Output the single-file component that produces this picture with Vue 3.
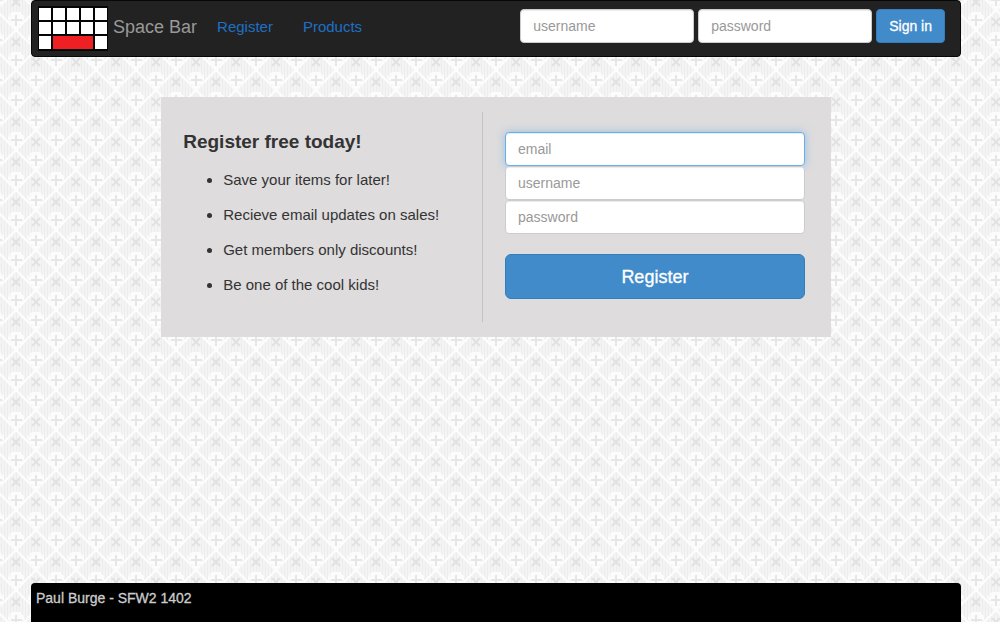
<script setup>
import { ref, onMounted } from 'vue'

const login = ref({ username: '', password: '' })
const account = ref({ email: '', username: '', password: '' })
const emailField = ref(null)
const perks = [
  'Save your items for later!',
  'Recieve email updates on sales!',
  'Get members only discounts!',
  'Be one of the cool kids!',
]

onMounted(() => emailField.value.focus())
</script>

<template>
  <div class="page">
    <svg class="backdrop" aria-hidden="true">
      <defs>
        <g id="motif">
          <path d="M0-30 20-10 0 10-20-10Z" fill="none" stroke="#fdfdfd" stroke-width="2" />
          <path d="M-8-4-4-8h8l4 4v6L0 10-8 2Z" fill="#fcfcfc" />
          <path d="M-7-4h2m10-2h2M-5 5h2m6 0h2M-8 1h2m12 0h2" stroke="#f0f0f0" stroke-width="1" />
          <path d="M0-5V6M-5 0H6" stroke="#e6e6e6" stroke-width="2" fill="none" />
          <path d="m-4-22 8 8m0-8-8 8" stroke="#e2e2e2" stroke-width="2" fill="none" />
        </g>
        <pattern id="damask" width="40" height="40" patternUnits="userSpaceOnUse">
          <rect width="40" height="40" fill="#f4f4f4" />
          <path d="M1.5 0v40m3-40v40m3-40v40m3-40v40m3-40v40m3-40v40m3-40v40m3-40v40m3-40v40m3-40v40m3-40v40m3-40v40m3-40v40" stroke="#ededed" stroke-width="1" />
          <use href="#motif" x="16" y="20" />
          <use href="#motif" x="16" y="60" />
          <use href="#motif" x="36" y="0" />
          <use href="#motif" x="36" y="40" />
          <use href="#motif" x="-4" y="0" />
          <use href="#motif" x="-4" y="40" />
        </pattern>
      </defs>
      <rect width="100%" height="100%" fill="url(#damask)" />
    </svg>
    <div class="container">
      <header class="navbar">
        <a class="brand" href="#">
          <svg width="70" height="45" viewBox="0 0 70 45" aria-hidden="true">
            <rect width="70" height="45" fill="#050505" />
            <path fill="#fff" d="M1 2h12v12H1zM15 2h12v12H15zM29 2h12v12H29zM43 2h12v12H43zM57 2h12v12H57zM1 16h12v12H1zM15 16h12v12H15zM29 16h12v12H29zM43 16h12v12H43zM57 16h12v12H57zM1 30h12v13H1zM57 30h12v13H57z" />
            <path fill="#ee2024" d="M15 30h40v13H15z" />
          </svg>
          <span>Space Bar</span>
        </a>
        <nav class="links">
          <a href="#register">Register</a>
          <a href="#products">Products</a>
        </nav>
        <form class="login" @submit.prevent>
          <input v-model="login.username" class="field" type="text" placeholder="username" aria-label="Username">
          <input v-model="login.password" class="field" type="password" placeholder="password" aria-label="Password">
          <button class="button" type="submit">Sign in</button>
        </form>
      </header>

      <main id="register" class="panel">
        <section class="perks">
          <h1>Register free today!</h1>
          <ul>
            <li v-for="perk in perks" :key="perk">{{ perk }}</li>
          </ul>
        </section>
        <form class="signup" @submit.prevent>
          <input ref="emailField" v-model="account.email" class="field" type="email" placeholder="email" aria-label="Email">
          <input v-model="account.username" class="field" type="text" placeholder="username" aria-label="Choose a username">
          <input v-model="account.password" class="field" type="password" placeholder="password" aria-label="Choose a password">
          <button class="button large" type="submit">Register</button>
        </form>
      </main>

      <footer class="footer">Paul Burge - SFW2 1402</footer>
    </div>
  </div>
</template>

<style>
body {
  margin: 0;
}
</style>

<style scoped>
* {
  box-sizing: border-box;
}

.page {
  position: relative;
  min-height: 100vh;
  font: 15px/20px "Liberation Sans", Arial, sans-serif;
  color: #333;
}

.backdrop {
  position: absolute;
  inset: 0;
  width: 100%;
  height: 100%;
}

.container {
  position: relative;
  display: flex;
  flex-direction: column;
  min-height: 100vh;
  margin: 0 39px 0 31px;
}

.navbar {
  display: flex;
  align-items: center;
  padding: 4px 15px 4px 6px;
  border: 1px solid #080808;
  border-radius: 4px;
  background: #222;
}

.brand {
  display: flex;
  align-items: center;
  gap: 5px;
  height: 47px;
  font-size: 18px;
  color: #999;
  text-decoration: none;
}

.brand span,
.links {
  margin-bottom: 4px;
}

.links {
  display: flex;
  gap: 30px;
  margin-left: 20px;
}

.links a {
  color: #1e70c5;
  text-decoration: none;
}

.login {
  display: flex;
  gap: 4px;
  margin: 0 0 5px auto;
}

.login .field {
  width: 174px;
}

.field {
  display: block;
  width: 100%;
  height: 34px;
  padding: 6px 12px;
  border: 1px solid #ccc;
  border-radius: 4px;
  background: #fff;
  box-shadow: inset 0 1px 1px rgba(0, 0, 0, 0.08);
  font: inherit;
  font-size: 14px;
  color: #555;
}

.field::placeholder {
  color: #999;
  opacity: 1;
}

.field:focus {
  border-color: #66afe9;
  outline: 0;
  box-shadow: inset 0 1px 1px rgba(0, 0, 0, 0.08), 0 0 8px rgba(102, 175, 233, 0.6);
}

.button {
  height: 34px;
  padding: 0 12px;
  border: 1px solid #357ebd;
  border-radius: 4px;
  background: #428bca;
  font: inherit;
  font-size: 14px;
  color: #fff;
  -webkit-text-stroke: 0.3px #fff;
  cursor: pointer;
}

.panel {
  display: grid;
  grid-template-columns: 300fr 322fr;
  width: 72%;
  margin: 40px auto 0;
  padding: 15px 26px 15px 22px;
  background: #dedcdd;
}

.perks {
  min-height: 210px;
  border-right: 1px solid #c4c2c3;
}

.perks h1 {
  margin: 20px 0 18px;
  font-size: 19px;
  line-height: 20px;
}

.perks ul {
  display: grid;
  gap: 15px;
  margin: 0;
  padding-left: 40px;
}

.signup {
  padding: 20px 0 0 22px;
}

.large {
  width: 100%;
  height: 45px;
  margin-top: 20px;
  border-radius: 6px;
  font-size: 18px;
}

.footer {
  height: 39px;
  margin-top: auto;
  padding: 5px;
  border-radius: 4px 4px 0 0;
  background: #000;
  font-size: 14px;
  color: #ccc;
  -webkit-text-stroke: 0.3px #ccc;
}
</style>
